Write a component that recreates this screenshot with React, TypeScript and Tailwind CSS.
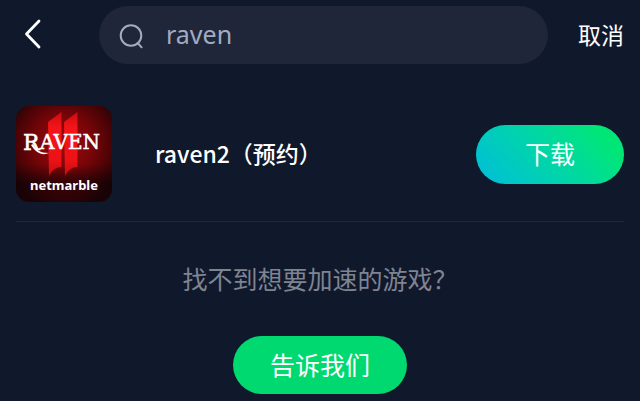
import { useState } from "react";

function BackIcon() {
  return (
    <svg width="20" height="32" viewBox="0 0 20 32" fill="none" stroke="#fff" strokeWidth="2.8" strokeLinecap="round" strokeLinejoin="round" aria-hidden="true">
      <path d="M15 2 2.500 15 15 28" />
    </svg>
  );
}

function SearchIcon() {
  return (
    <svg className="shrink-0" width="24" height="26" viewBox="0 0 24 26" fill="none" stroke="#a3abc0" strokeWidth="2" strokeLinecap="round" aria-hidden="true">
      <circle cx="12" cy="12.500" r="10.300" />
      <path d="m18.700 20 3.900 4.300" />
    </svg>
  );
}

function GameLogo() {
  return (
    <svg className="shrink-0" width="96" height="96" viewBox="0 0 96 96" role="img" aria-label="Raven 2 netmarble">
      <defs>
        <radialGradient id="glow" cx="0.5" cy="0.4" r="0.66">
          <stop offset="0" stopColor="#9c0a0d" />
          <stop offset="0.45" stopColor="#780508" />
          <stop offset="0.75" stopColor="#4a0306" />
          <stop offset="1" stopColor="#1c0306" />
        </radialGradient>
        <linearGradient id="blade" x1="0" y1="0" x2="0" y2="1">
          <stop offset="0" stopColor="#c90c10" />
          <stop offset="0.25" stopColor="#f51418" />
          <stop offset="0.75" stopColor="#ec1216" />
          <stop offset="1" stopColor="#c50c10" />
        </linearGradient>
        <linearGradient id="floor" x1="0" y1="0" x2="0" y2="1">
          <stop offset="0" stopColor="#120205" stopOpacity="0" />
          <stop offset="0.5" stopColor="#120205" stopOpacity="0.6" />
          <stop offset="1" stopColor="#120205" stopOpacity="0.2" />
        </linearGradient>
      </defs>
      <rect width="96" height="96" rx="13" fill="url(#glow)" />
      <path d="M0 58H96V83a13 13 0 0 1-13 13H13A13 13 0 0 1 0 83Z" fill="url(#floor)" />
      <path d="M32 16 45.500 6V61C40 61 36 64 33 70Z" fill="url(#blade)" />
      <path d="M48 16 61.500 6V61C56 61 52 64 49 70Z" fill="url(#blade)" />
      <g fill="#fff" stroke="#fff">
        <text x="7" y="44" fontSize="22" strokeWidth="0.5" fontFamily="'DejaVu Serif', serif">R</text>
        <text x="24" y="43" fontSize="20" strokeWidth="0.5" fontFamily="'DejaVu Serif', serif">AVEN</text>
        <text x="48" y="84" fontSize="13" strokeWidth="0" fontWeight="700" textAnchor="middle" fontFamily="'Noto Sans', sans-serif">netmarble</text>
        <path d="M17 38c3 6 7 9 16 9-7 3-13 0-18-8Z" strokeWidth="0" />
      </g>
    </svg>
  );
}

export default function App() {
  const [query, setQuery] = useState("raven");

  return (
    <main className="flex min-h-screen flex-col bg-[#10182c] px-4 pt-1.5 font-['Noto_Sans_CJK_SC',sans-serif] text-white">
      <header className="flex items-center">
        <button type="button" aria-label="返回" className="flex w-[83px] shrink-0 justify-start pl-2">
          <BackIcon />
        </button>
        <label className="flex h-[58px] min-w-0 flex-1 items-center gap-[23px] rounded-full bg-[#1f263a] px-5 pt-0.5">
          <SearchIcon />
          <input
            type="text"
            aria-label="搜索"
            value={query}
            onChange={(e) => setQuery(e.target.value)}
            className="min-w-0 flex-1 bg-transparent pb-1 font-['Noto_Sans',sans-serif] text-[25px] leading-8 text-[#a3abc0] outline-none"
          />
        </label>
        <button type="button" className="shrink-0 pb-0.5 pl-[30px] text-[23px] leading-8">
          取消
        </button>
      </header>

      <section className="mt-[42px] flex items-center border-b border-[#20283a] pb-[19px]">
        <GameLogo />
        <h2 className="ml-[43px] min-w-0 flex-1 pb-0.5 text-[23px] leading-8 font-medium">raven2（预约）</h2>
        <button type="button" className="h-[59px] w-[148px] shrink-0 rounded-full bg-linear-50 from-[#00c2d0] from-10% to-[#00e676] to-85% pb-0.5 text-[25px] leading-8">
          下载
        </button>
      </section>

      <section className="flex flex-col items-center pt-10">
        <p className="text-[25px] leading-8 text-[#7f8491]">找不到想要加速的游戏？</p>
        <button type="button" className="mt-[42px] h-[58px] w-[174px] rounded-full bg-[#00d970] pb-0.5 text-[25px] leading-8">
          告诉我们
        </button>
      </section>
    </main>
  );
}
